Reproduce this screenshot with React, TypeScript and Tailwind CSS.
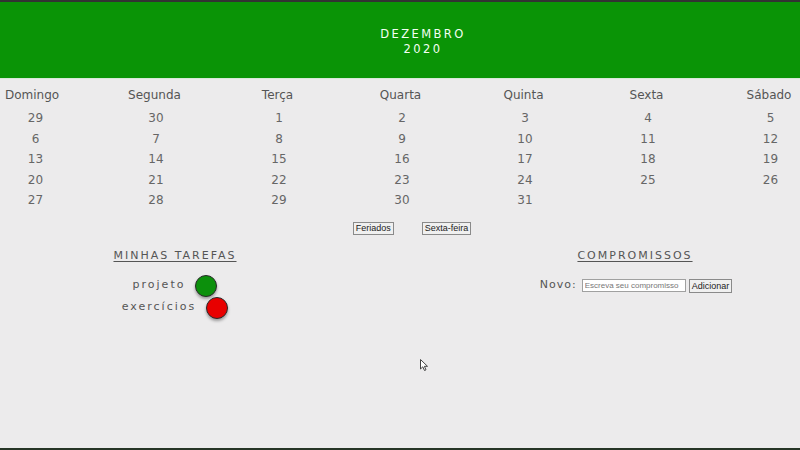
import React from "react";

const days = ["Domingo", "Segunda", "Terça", "Quarta", "Quinta", "Sexta", "Sábado"];
const weeks: (number | null)[][] = [
  [29, 30, 1, 2, 3, 4, 5],
  [6, 7, 8, 9, 10, 11, 12],
  [13, 14, 15, 16, 17, 18, 19],
  [20, 21, 22, 23, 24, 25, 26],
  [27, 28, 29, 30, 31, null, null],
];

const cols = "grid grid-cols-[58px_repeat(5,63px)_62px] gap-x-[60px] pl-[5px]";

export default function App() {
  return (
    <div className="relative h-[450px] w-[800px] overflow-hidden bg-[#ecebec] flex flex-col font-['DejaVu_Sans',sans-serif]">
      <div className="h-[2px] bg-[#333333]" />
      <div className="h-[76px] bg-[#0a9406] flex flex-col items-center justify-center pl-[46px] pt-[4px] text-[11.5px] leading-[15px] tracking-[2.4px] text-[#f4fff4]">
        <div>DEZEMBRO</div>
        <div>2020</div>
      </div>
      <div className="h-[1px] bg-[#d8e8d8]" />

      <div className="mt-[5px] text-[12px]">
        <div className={`${cols} h-[21px] items-center text-[#555555]`}>
          {days.map((d, i) => (
            <div key={d} className={`${i === 0 ? "text-left" : "text-center"} whitespace-nowrap`}>{d}</div>
          ))}
        </div>
        <div className="h-[3px]" />
        {weeks.map((w, i) => (
          <div key={i} className={`${cols} h-[20.5px] items-center text-[#666666]`}>
            {w.map((n, j) => (
              <div key={j} className="text-center pl-[3px]">{n ?? ""}</div>
            ))}
          </div>
        ))}
      </div>

      <div className="mt-[11px] flex justify-center gap-[28px] pl-[24px] font-['Liberation_Sans',Arial,sans-serif] text-[9px] text-[#222]">
        <button className="h-[13px] px-[2px] leading-[11px] border border-[#8a8a8a] bg-[#f0f0f0]">Feriados</button>
        <button className="h-[13px] px-[2px] leading-[11px] border border-[#8a8a8a] bg-[#f0f0f0]">Sexta-feira</button>
      </div>

      <div className="mt-[14px] grid grid-cols-[350px_330px] gap-x-[120px] text-[#555555]">
        <div className="flex flex-col items-center">
          <div className="text-[11px] leading-[14px] tracking-[2px] underline underline-offset-[2px]">MINHAS TAREFAS</div>
          <div className="mt-[12px] flex flex-col items-center">
            <div className="flex items-center gap-[10px] h-[22px]">
              <span className="text-[11px] tracking-[2px]">projeto</span>
              <span className="w-[22px] h-[22px] rounded-full bg-[#0c900c] border border-[#2a2a2a] shadow-[0_2px_3px_rgba(0,0,0,0.35)]" />
            </div>
            <div className="flex items-center gap-[10px] h-[22px]">
              <span className="text-[11px] tracking-[2px]">exercícios</span>
              <span className="w-[22px] h-[22px] rounded-full bg-[#e80000] border border-[#2a2a2a] shadow-[0_2px_3px_rgba(0,0,0,0.35)]" />
            </div>
          </div>
        </div>
        <div className="flex flex-col items-center pl-[2px]">
          <div className="text-[11px] leading-[14px] tracking-[2px] underline underline-offset-[2px] -ml-[2px]">COMPROMISSOS</div>
          <div className="mt-[12px] flex items-center h-[22px]">
            <span className="text-[11px] tracking-[1px] mr-[5px]">Novo:</span>
            <input
              placeholder="Escreva seu compromisso"
              className="w-[104px] h-[13px] px-[2px] border border-[#a0a0a0] bg-white font-['Liberation_Sans',Arial,sans-serif] text-[8px] placeholder:text-[#777]"
            />
            <button className="ml-[3px] h-[14px] px-[2px] leading-[12px] border border-[#8a8a8a] bg-[#f0f0f0] font-['Liberation_Sans',Arial,sans-serif] text-[9px] text-[#222]">Adicionar</button>
          </div>
        </div>
      </div>

      <div className="flex-1" />
      <div className="h-[2px] bg-[#263526]" />

      <svg className="absolute left-[420px] top-[359px]" width="9" height="13" viewBox="0 0 9 13">
        <path d="M0.5 0.5 L0.5 10 L2.8 7.8 L4.5 11.5 L6 10.8 L4.4 7.3 L7.5 7.3 Z" fill="#fff" stroke="#444" strokeWidth="1" />
      </svg>
    </div>
  );
}
